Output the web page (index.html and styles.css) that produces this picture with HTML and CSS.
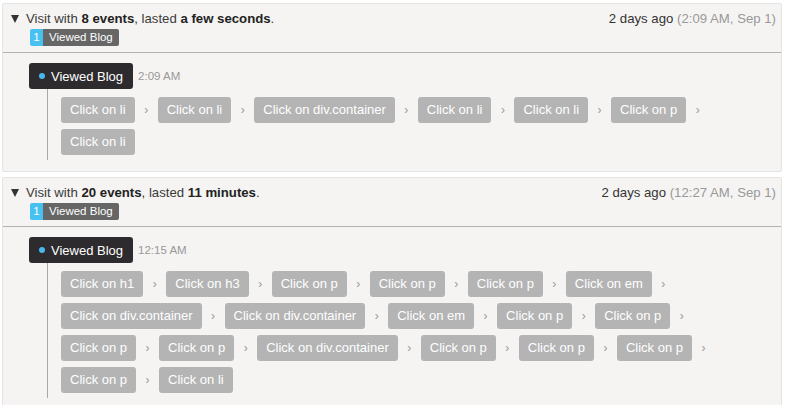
FILE: index.html
```html
<!DOCTYPE html>
<html>
<head>
<meta charset="utf-8">
<link rel="stylesheet" href="styles.css">
</head>
<body>
<div class="visit">
  <div class="visit-head">
    <div class="visit-info">
      <div class="visit-title"><span class="tri"></span>Visit with <b>8 events</b>, lasted <b>a few seconds</b>.</div>
      <div class="badge"><span class="badge-num">1</span><span class="badge-label">Viewed Blog</span></div>
    </div>
    <div class="visit-when">2 days ago <span class="muted">(2:09 AM, Sep 1)</span></div>
  </div>
  <div class="visit-body">
    <div class="event"><span class="event-box"><span class="dot"></span>Viewed Blog</span><span class="event-time">2:09 AM</span></div>
    <div class="timeline">
      <span class="step"><span class="chip">Click on li</span><span class="arrow">›</span></span>
      <span class="step"><span class="chip">Click on li</span><span class="arrow">›</span></span>
      <span class="step"><span class="chip">Click on div.container</span><span class="arrow">›</span></span>
      <span class="step"><span class="chip">Click on li</span><span class="arrow">›</span></span>
      <span class="step"><span class="chip">Click on li</span><span class="arrow">›</span></span>
      <span class="step"><span class="chip">Click on p</span><span class="arrow">›</span></span>
      <span class="step"><span class="chip">Click on li</span></span>
    </div>
  </div>
</div>
<div class="visit">
  <div class="visit-head">
    <div class="visit-info">
      <div class="visit-title"><span class="tri"></span>Visit with <b>20 events</b>, lasted <b>11 minutes</b>.</div>
      <div class="badge"><span class="badge-num">1</span><span class="badge-label">Viewed Blog</span></div>
    </div>
    <div class="visit-when">2 days ago <span class="muted">(12:27 AM, Sep 1)</span></div>
  </div>
  <div class="visit-body">
    <div class="event"><span class="event-box"><span class="dot"></span>Viewed Blog</span><span class="event-time">12:15 AM</span></div>
    <div class="timeline">
      <span class="step"><span class="chip">Click on h1</span><span class="arrow">›</span></span>
      <span class="step"><span class="chip">Click on h3</span><span class="arrow">›</span></span>
      <span class="step"><span class="chip">Click on p</span><span class="arrow">›</span></span>
      <span class="step"><span class="chip">Click on p</span><span class="arrow">›</span></span>
      <span class="step"><span class="chip">Click on p</span><span class="arrow">›</span></span>
      <span class="step"><span class="chip">Click on em</span><span class="arrow">›</span></span>
      <span class="step"><span class="chip">Click on div.container</span><span class="arrow">›</span></span>
      <span class="step"><span class="chip">Click on div.container</span><span class="arrow">›</span></span>
      <span class="step"><span class="chip">Click on em</span><span class="arrow">›</span></span>
      <span class="step"><span class="chip">Click on p</span><span class="arrow">›</span></span>
      <span class="step"><span class="chip">Click on p</span><span class="arrow">›</span></span>
      <span class="step"><span class="chip">Click on p</span><span class="arrow">›</span></span>
      <span class="step"><span class="chip">Click on p</span><span class="arrow">›</span></span>
      <span class="step"><span class="chip">Click on div.container</span><span class="arrow">›</span></span>
      <span class="step"><span class="chip">Click on p</span><span class="arrow">›</span></span>
      <span class="step"><span class="chip">Click on p</span><span class="arrow">›</span></span>
      <span class="step"><span class="chip">Click on p</span><span class="arrow">›</span></span>
      <span class="step"><span class="chip">Click on p</span><span class="arrow">›</span></span>
      <span class="step"><span class="chip">Click on li</span></span>
    </div>
  </div>
</div>
</body>
</html>
```
FILE: styles.css
```css
html, body {
  margin: 0;
  padding: 0;
  background: #ffffff;
}
body {
  font-family: "Liberation Sans", Arial, sans-serif;
  font-size: 13px;
  color: #333333;
  padding: 3px 5px 0 2px;
}
.visit {
  border: 1px solid #e4e4e4;
  border-radius: 2px;
  background: #f5f4f2;
  margin-bottom: 5px;
}
.visit-head {
  display: flex;
  justify-content: space-between;
  align-items: flex-start;
  padding: 6px 5px 6px 8px;
  border-bottom: 1px solid #b2b2b2;
}
.visit-title {
  line-height: 18px;
  font-size: 13.2px;
  color: #3a3a3a;
}
.visit-title b {
  color: #222222;
}
.tri {
  display: inline-block;
  width: 0;
  height: 0;
  border-left: 4.5px solid transparent;
  border-right: 4.5px solid transparent;
  border-top: 8px solid #333333;
  margin: 0 7px 1px 0;
  vertical-align: middle;
}
.badge {
  display: flex;
  width: max-content;
  margin: 1px 0 0 19px;
  height: 17px;
  line-height: 17px;
  font-size: 11.5px;
  border-radius: 2px;
  overflow: hidden;
  color: #ffffff;
}
.badge-num {
  background: #47c0f2;
  width: 13px;
  text-align: center;
}
.badge-label {
  background: #666666;
  padding: 0 6px 0 6px;
}
.visit-when {
  line-height: 18px;
  font-size: 13.2px;
  color: #333333;
}
.muted {
  color: #999999;
}
.visit-body {
  padding: 10px 36px 11px 26px;
}
.event {
  display: flex;
  align-items: center;
}
.event-box {
  display: inline-flex;
  align-items: center;
  background: #2e2b2f;
  color: #ffffff;
  height: 26px;
  padding: 0 10px 0 10px;
  border-radius: 3px;
  font-size: 13px;
}
.dot {
  width: 6px;
  height: 6px;
  border-radius: 50%;
  background: #47b8f0;
  margin-right: 6px;
}
.event-time {
  margin-left: 5px;
  font-size: 11.5px;
  color: #999999;
}
.timeline {
  margin-left: 18px;
  border-left: 1px solid #a8a8a8;
  padding: 8px 0 5px 13px;
  display: flex;
  flex-wrap: wrap;
  row-gap: 6px;
}
.step {
  display: inline-flex;
  align-items: center;
}
.chip {
  background: #b4b4b4;
  color: #ffffff;
  height: 26px;
  line-height: 26px;
  padding: 0 9px;
  border-radius: 3px;
  font-size: 13px;
}
.arrow {
  width: 23px;
  text-align: center;
  color: #999999;
  font-size: 12px;
}
```
